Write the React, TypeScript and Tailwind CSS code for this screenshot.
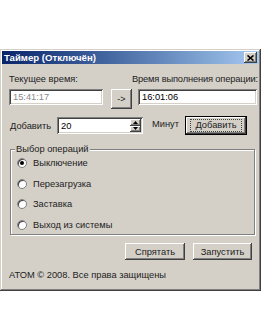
import React from "react";

const sunken =
  "bg-white shadow-[inset_1px_1px_#808080,inset_-1px_-1px_#ffffff,inset_2px_2px_#404040,inset_-2px_-2px_#d4d0c8]";
const raised =
  "bg-[#d4d0c8] shadow-[inset_-1px_-1px_#404040,inset_1px_1px_#ffffff,inset_-2px_-2px_#808080,inset_2px_2px_#d4d0c8]";

function Radio({ label, checked }: { label: string; checked?: boolean }) {
  return (
    <div className="flex items-center h-[20.5px]">
      <span className="w-[10px] h-[10px] shrink-0 rounded-full bg-white border border-[#808080] shadow-[inset_1px_1px_#404040] flex items-center justify-center">
        {checked && <span className="w-[4px] h-[4px] rounded-full bg-black" />}
      </span>
      <span className="ml-[6px]">{label}</span>
    </div>
  );
}

export default function App() {
  return (
    <div
      className="bg-white w-[262px] h-[334px] pt-[49px] text-[9.3px] leading-[12px] text-[#222]"
      style={{ fontFamily: '"Liberation Sans", Arial, sans-serif' }}
    >
      <div className="w-[261px] h-[242px] bg-[#d4d0c8] p-[2px] shadow-[inset_-1px_-1px_#404040,inset_1px_1px_#d4d0c8,inset_-2px_-2px_#808080,inset_2px_2px_#ffffff] flex flex-col">
        {/* title bar */}
        <div className="h-[13px] flex items-center justify-between bg-gradient-to-r from-[#0a246a] to-[#a6caf0] pl-[2px] pr-[2px]">
          <span className="text-white font-bold text-[9.6px] leading-[12px]">Таймер (Отключён)</span>
          <span className={`w-[13px] h-[11px] flex items-center justify-center ${raised}`}>
            <svg width="7" height="6" viewBox="0 0 7 6">
              <path d="M0.5 0.5 L6.5 5.5 M6.5 0.5 L0.5 5.5" stroke="#000" strokeWidth="1.6" />
            </svg>
          </span>
        </div>

        <div className="flex flex-col pl-[7px] pr-[2px]">
          {/* time row */}
          <div className="flex mt-[9px]">
            <div className="flex flex-col w-[94px] shrink-0">
              <span className="h-[14px]">Текущее время:</span>
              <div className={`h-[16px] mt-[2px] flex items-center pl-[4px] text-[#8a8a8a] ${sunken}`}>15:41:17</div>
            </div>
            <div className={`w-[21px] h-[20px] shrink-0 ml-[8px] mt-[16px] flex items-center justify-center text-[9px] ${raised}`}>
              -&gt;
            </div>
            <div className="flex flex-col shrink-0">
              <span className="h-[14px] whitespace-nowrap tracking-[-0.15px]">Время выполнения операции:</span>
              <div className={`w-[119px] h-[16px] mt-[2px] ml-[6px] flex items-center pl-[4px] text-black ${sunken}`}>16:01:06</div>
            </div>
          </div>

          {/* add row */}
          <div className="flex items-center mt-[7px] h-[19px]">
            <span className="ml-[1px] w-[47px] shrink-0">Добавить</span>
            <div className={`w-[86px] h-[17px] shrink-0 flex items-center justify-between pl-[4px] pr-[2px] text-black ${sunken}`}>
              <span>20</span>
              <span className="flex flex-col w-[11px] h-[13px]">
                <span className={`flex-1 flex items-center justify-center ${raised}`}>
                  <svg width="5" height="3" viewBox="0 0 5 3"><path d="M0 3 L2.5 0 L5 3Z" fill="#000" /></svg>
                </span>
                <span className={`flex-1 flex items-center justify-center ${raised}`}>
                  <svg width="5" height="3" viewBox="0 0 5 3"><path d="M0 0 L2.5 3 L5 0Z" fill="#000" /></svg>
                </span>
              </span>
            </div>
            <span className="ml-[9px] -mt-[3px] w-[33px] shrink-0">Минут</span>
            <div className="w-[62px] h-[19px] shrink-0 bg-[#d4d0c8] border border-black flex items-center justify-center shadow-[inset_-1px_-1px_#404040,inset_1px_1px_#ffffff,inset_-2px_-2px_#808080]">
              <span className="border border-dotted border-[#444] px-[4px] leading-[11px]">Добавить</span>
            </div>
          </div>

          {/* group box */}
          <div className="relative mt-[14px] ml-[1px] w-[245px] h-[86px] border border-[#808080] shadow-[1px_1px_#ffffff,inset_1px_1px_#ffffff] pt-[3px] pl-[6px]">
            <span className="absolute -top-[7px] left-[4px] px-[1px] bg-[#d4d0c8]">Выбор операций</span>
            <Radio label="Выключение" checked />
            <Radio label="Перезагрузка" />
            <Radio label="Заставка" />
            <Radio label="Выход из системы" />
          </div>

          {/* buttons */}
          <div className="flex mt-[8px] ml-[116px]">
            <div className={`w-[60px] h-[17px] flex items-center justify-center ${raised}`}>Спрятать</div>
            <div className={`w-[59px] h-[17px] ml-[8px] flex items-center justify-center ${raised}`}>Запустить</div>
          </div>

          <div className="mt-[9px]">АТОМ © 2008. Все права защищены</div>
        </div>
      </div>
    </div>
  );
}
